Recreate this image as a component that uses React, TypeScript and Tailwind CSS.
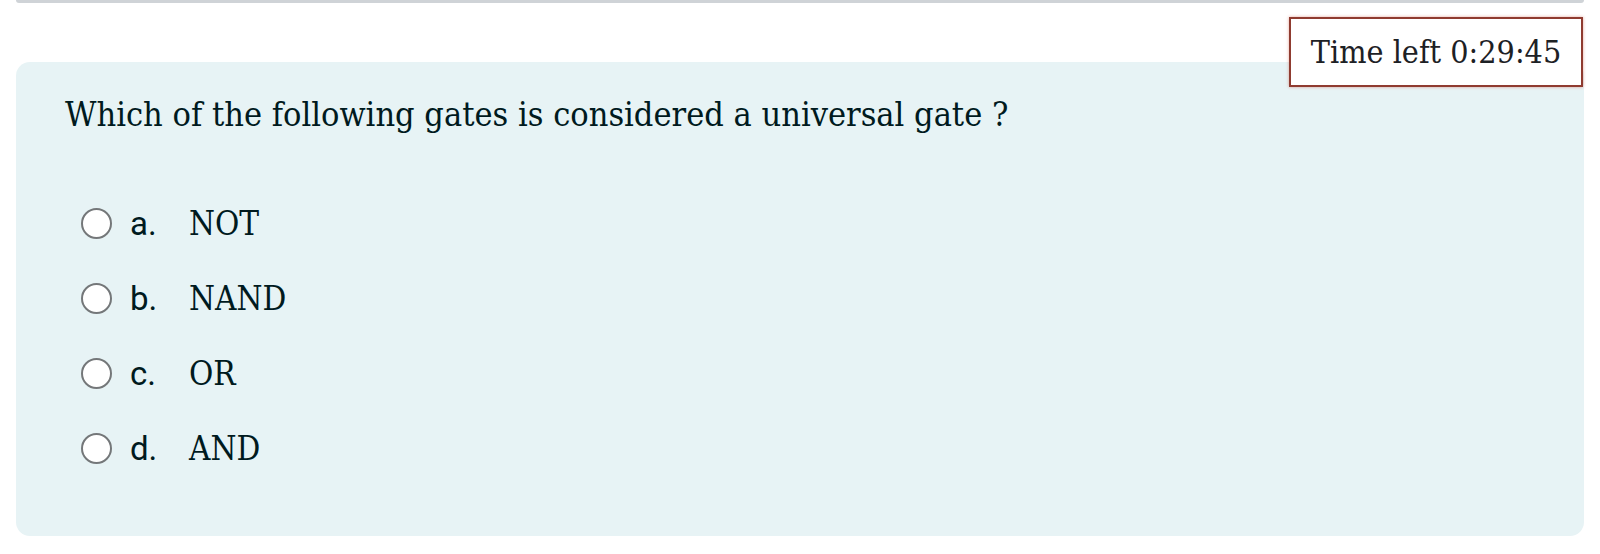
import React from "react";

const serif = "font-['DejaVu_Serif_Condensed','DejaVu_Serif',serif]";
const sans = "font-['Roboto','Liberation_Sans',sans-serif]";

const options = [
  { key: "a.", text: "NOT" },
  { key: "b.", text: "NAND" },
  { key: "c.", text: "OR" },
  { key: "d.", text: "AND" },
];

function Radio() {
  return (
    <span className="box-border block h-[31px] w-[31px] shrink-0 rounded-full border-2 border-[#747779] bg-white" />
  );
}

export default function App() {
  return (
    <div className="relative min-h-[554px] bg-white px-4">
      <div className="h-[3px] w-full rounded-b bg-[#cfd3d7]" />

      {/* quiz timer */}
      <div className="absolute right-[17px] top-[17px] z-10 box-border flex h-[70px] w-[294px] items-center justify-center border-2 border-[#8f3b30] bg-white shadow-[0_0_3px_rgba(200,60,40,0.45)]">
        <span className={`${serif} text-[32px] leading-none text-[#1d2125]`}>
          Time left 0:29:45
        </span>
      </div>

      <div className="mt-[59px] h-[474px] rounded-[14px] bg-[#e7f3f5] pl-[49px] pt-[32px]">
        <p className={`${serif} text-[34px] leading-[40px] text-[#001a1e]`}>
          Which of the following gates is considered a universal gate ?
        </p>

        <div className="mt-[69px] flex flex-col gap-[35px]">
          {options.map((o) => (
            <label key={o.key} className="flex h-[40px] items-center">
              <span className="ml-[16px] mr-[18px]">
                <Radio />
              </span>
              <span className={`${sans} w-[59px] text-[33px] leading-none text-[#001a1e]`}>
                {o.key}
              </span>
              <span className={`${serif} text-[33px] leading-none text-[#001a1e]`}>
                {o.text}
              </span>
            </label>
          ))}
        </div>
      </div>
    </div>
  );
}
